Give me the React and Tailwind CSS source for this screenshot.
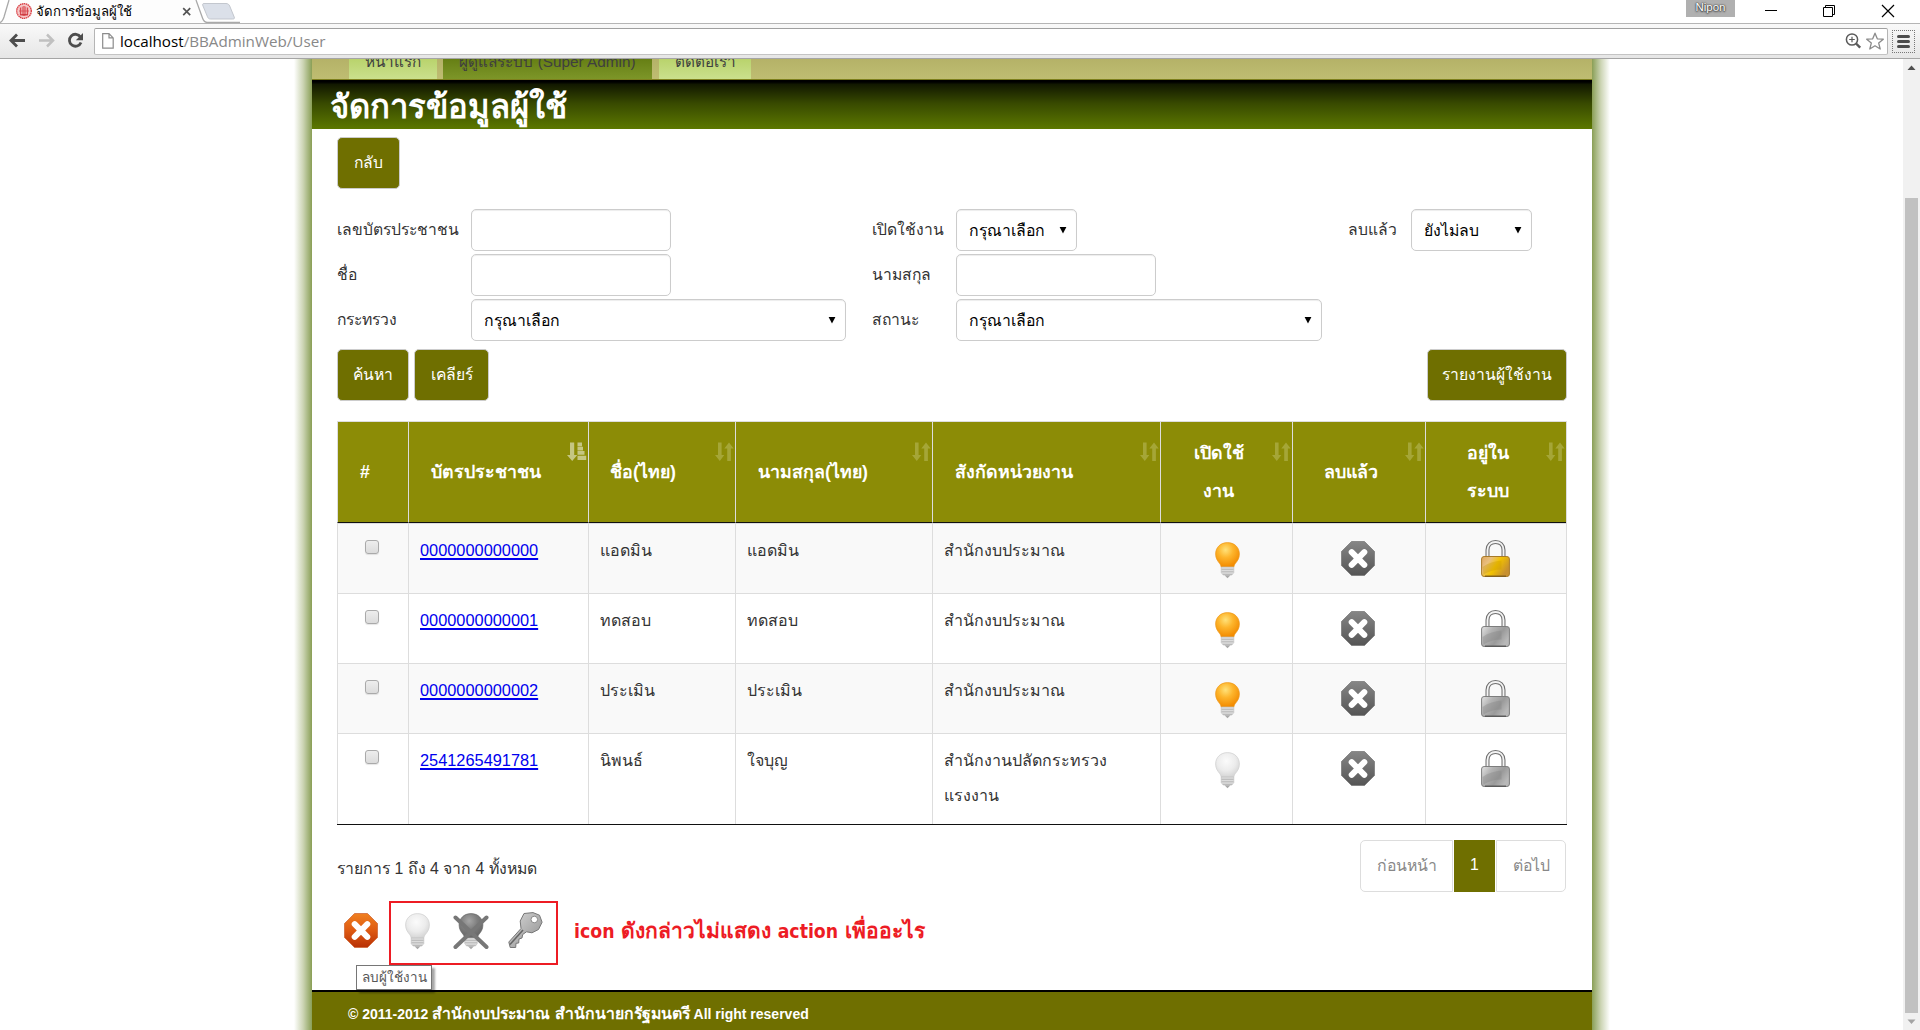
const SELECT_ARROW = (
  <svg width="8" height="8" viewBox="0 0 8 8" className="mr-0.5 shrink-0">
    <path d="M0.6 1h6.8L4 7.4z" fill="#000" />
  </svg>
);

function Defs() {
  return (
    <svg width="0" height="0" className="absolute">
      <defs>
        <radialGradient id="amber" cx="0.42" cy="0.3" r="0.7">
          <stop offset="0" stopColor="#ffe27a" />
          <stop offset="0.45" stopColor="#fdb52c" />
          <stop offset="1" stopColor="#f28a00" />
        </radialGradient>
        <radialGradient id="pale" cx="0.45" cy="0.35" r="0.65">
          <stop offset="0" stopColor="#fbfbfb" />
          <stop offset="0.6" stopColor="#ececec" />
          <stop offset="1" stopColor="#d6d6d6" />
        </radialGradient>
        <radialGradient id="ash" cx="0.42" cy="0.3" r="0.7">
          <stop offset="0" stopColor="#a6a6a6" />
          <stop offset="0.5" stopColor="#7e7e7e" />
          <stop offset="1" stopColor="#666" />
        </radialGradient>
        <linearGradient id="octGrey" x1="0" y1="0" x2="0" y2="1">
          <stop offset="0" stopColor="#868686" />
          <stop offset="1" stopColor="#555" />
        </linearGradient>
        <linearGradient id="octRed" x1="0" y1="0" x2="0" y2="1">
          <stop offset="0" stopColor="#f08020" />
          <stop offset="0.5" stopColor="#de5a12" />
          <stop offset="1" stopColor="#b83005" />
        </linearGradient>
        <linearGradient id="gold" x1="0" y1="0" x2="1" y2="0.5">
          <stop offset="0" stopColor="#e0a860" />
          <stop offset="0.3" stopColor="#e9c080" />
          <stop offset="0.6" stopColor="#f2c200" />
          <stop offset="1" stopColor="#c79030" />
        </linearGradient>
        <linearGradient id="silver" x1="0" y1="0" x2="1" y2="0.5">
          <stop offset="0" stopColor="#e4e4e4" />
          <stop offset="0.35" stopColor="#b4b4b4" />
          <stop offset="0.7" stopColor="#9a9a9a" />
          <stop offset="1" stopColor="#b8b8b8" />
        </linearGradient>
        <linearGradient id="keyFill" x1="0" y1="0" x2="1" y2="1">
          <stop offset="0" stopColor="#dadada" />
          <stop offset="1" stopColor="#8c8c8c" />
        </linearGradient>
      </defs>
    </svg>
  );
}

const BULB_GLASS =
  "M12.5 0.6C5.6 0.6 0.6 5.4 0.6 12c0 4.300 2 7 4 9.400 1 1.200 1.400 2.600 1.500 3.600h12.800c0.100-1 0.500-2.400 1.500-3.600 2-2.400 4-5.100 4-9.400C24.400 5.400 19.400 0.600 12.500 0.600z";

function BulbParts({ glass, edge }) {
  return (
    <>
      <path d={BULB_GLASS} fill={glass} stroke={edge} strokeWidth="0.7" />
      <path d="M6.200 25h12.600v5.500l-1.800 2.500h-9l-1.800-2.500z" fill="#dcdcdc" stroke="#bdbdbd" strokeWidth="0.6" />
      <path d="M6.500 27.300h12M6.500 29.800h12M8 32.300h9" stroke="#b2b2b2" strokeWidth="0.9" />
      <path d="M9.500 33.200h6L12.500 36.200z" fill="#a9a9a9" />
    </>
  );
}

function Bulb({ on }) {
  return (
    <svg width="25" height="37" viewBox="0 0 25 37">
      <BulbParts glass={on ? "url(#amber)" : "url(#pale)"} edge={on ? "#ee9a1c" : "#cfcfcf"} />
    </svg>
  );
}

function BulbCrossed() {
  return (
    <svg width="36" height="37" viewBox="0 0 36 37">
      <g transform="translate(5.500 0)">
        <BulbParts glass="url(#ash)" edge="#6a6a6a" />
      </g>
      <path d="M2.500 4.500L33.500 34M33.500 4.500L2.500 34" stroke="#777" strokeWidth="4" strokeLinecap="round" />
    </svg>
  );
}

function Octagon({ red }) {
  return (
    <svg width="34" height="35" viewBox="0 0 34 35">
      <path
        d="M10.500 0.500h13L33.500 10.500v14L23.500 34.500h-13L0.500 24.500v-14z"
        fill={red ? "url(#octRed)" : "url(#octGrey)"}
        stroke={red ? "#d06a3a" : "#7c7c7c"}
        strokeWidth="0.8"
      />
      <path d="M10.700 11.200L23.300 23.800M23.300 11.200L10.700 23.800" stroke="#fff" strokeWidth="6" strokeLinecap="round" />
    </svg>
  );
}

function Lock({ gold }) {
  return (
    <svg width="29" height="37" viewBox="0 0 29 37">
      <path d="M6.500 18v-8c0-5 3.300-8 8-8s8 3 8 8v8" fill="none" stroke="#6e6e6e" strokeWidth="4" />
      <path d="M6.500 18v-8c0-5 3.300-8 8-8s8 3 8 8v8" fill="none" stroke="#f4f4f4" strokeWidth="1.900" />
      <rect x="0.600" y="16.500" width="27.800" height="20" rx="2.500" fill={gold ? "url(#gold)" : "url(#silver)"} stroke={gold ? "#a87a28" : "#7d7d7d"} />
      <path d="M1.500 27c6-4 12-6 19-6.500v9c-7 0-12 1.500-18 5z" fill={gold ? "#c99700" : "#808080"} opacity="0.35" />
      <path d="M4 36.200h21" stroke={gold ? "#7c5c1c" : "#555"} strokeWidth="1.300" />
    </svg>
  );
}

function KeyIcon() {
  return (
    <svg width="35" height="36" viewBox="0 0 35 36">
      <path
        d="M16 1.500L25 0.600l6.500 2.600 2.600 7-3.600 7.300-6.500 3.300-5.500-1-3.800 2.700-0.700 3.500-3 1-0.300 4-2.700 0.300-0.300 4.200H2.200L0.800 30 13 16.500 12.200 9z"
        fill="url(#keyFill)"
        stroke="#777"
        strokeWidth="1"
        strokeLinejoin="round"
      />
      <path d="M2 32.500L15 18" stroke="#666" strokeWidth="1.600" />
      <circle cx="26.300" cy="7.500" r="3.300" fill="#fff" stroke="#8a8a8a" />
    </svg>
  );
}

function SortIcon({ active }) {
  return active ? (
    <svg width="20" height="20" viewBox="0 0 20 20" className="absolute top-[20px] right-px" fill="#c5c683">
      <path d="M3 0.500h4.200v12.500h3.100L5.200 19 0 13h3z" />
      <path d="M10.500 0.500h4.500v3.700h-4.500zM10.500 4.800h5.500v3.700h-5.500zM10.500 9.100h7v3.700h-7zM10.500 13.700h8.700v4.200h-8.700z" />
    </svg>
  ) : (
    <svg width="19" height="20" viewBox="0 0 19 20" className="absolute top-[20px] right-px" fill="#a5a637">
      <path d="M3 0.500h3.600v12.500h2.700L4.800 19 0 13h3z" />
      <path d="M12.200 19V6.500H9.300L14 0.500l4.700 6h-2.800V19z" />
    </svg>
  );
}

function Button({ children, className }) {
  return (
    <button className={`flex shrink-0 justify-center rounded-[5px] border border-[#ccc] bg-[#6f6f00] text-[15.700px] leading-[49px] font-light whitespace-nowrap text-white ${className}`}>
      {children}
    </button>
  );
}

function TextBox({ className }) {
  return <div className={`h-[42px] rounded-[5px] border border-[#ccc] bg-white shadow-[inset_0_1px_1px_rgba(0,0,0,0.075)] ${className}`} />;
}

function SelectBox({ children, className }) {
  return (
    <div className={`flex h-[42px] items-center justify-between rounded-[5px] border border-[#ccc] bg-white pr-[7px] pl-3 text-[15.800px] font-light text-black shadow-[inset_0_1px_1px_rgba(0,0,0,0.075)] ${className}`}>
      <span className="pt-[2px]">{children}</span>
      {SELECT_ARROW}
    </div>
  );
}

function Label({ children }) {
  return <span className="text-[15.700px] font-light whitespace-nowrap text-[#333]">{children}</span>;
}

const HEAD = [
  { t: "#", c: "pl-[22px] text-left", s: "" },
  { t: "บัตรประชาชน", c: "pl-[22px] text-left", s: "active" },
  { t: "ชื่อ(ไทย)", c: "pl-[21px] text-left", s: "both" },
  { t: "นามสกุล(ไทย)", c: "pl-[22px] text-left", s: "both" },
  { t: "สังกัดหน่วยงาน", c: "pl-[22px] text-left", s: "both" },
  { t: "เปิดใช้\nงาน", c: "pr-[16px] text-center", s: "both" },
  { t: "ลบแล้ว", c: "pr-[16px] text-center", s: "both" },
  { t: "อยู่ใน\nระบบ", c: "pr-[17px] text-center", s: "both" },
];

const ROWS = [
  { id: "0000000000000", first: "แอดมิน", last: "แอดมิน", org: "สำนักงบประมาณ", on: true, online: true },
  { id: "0000000000001", first: "ทดสอบ", last: "ทดสอบ", org: "สำนักงบประมาณ", on: true, online: false },
  { id: "0000000000002", first: "ประเมิน", last: "ประเมิน", org: "สำนักงบประมาณ", on: true, online: false },
  { id: "2541265491781", first: "นิพนธ์", last: "ใจบุญ", org: "สำนักงานปลัดกระทรวง\nแรงงาน", on: false, online: false },
];

function UserTable() {
  return (
    <table className="w-[1230px] table-fixed border-separate border-spacing-0 border-r border-[#ddd]">
      <colgroup>
        <col className="w-[71px]" />
        <col className="w-[180px]" />
        <col className="w-[147px]" />
        <col className="w-[197px]" />
        <col className="w-[228px]" />
        <col className="w-[132px]" />
        <col className="w-[133px]" />
        <col className="w-[141px]" />
      </colgroup>
      <thead>
        <tr className="h-[102px] bg-[#8c8c06]">
          {HEAD.map((h) => (
            <th
              key={h.t}
              className={`relative border-t border-b border-l border-t-[#ddd] border-b-[#111] border-l-[#ddd] py-0 align-middle text-[17.800px] leading-[38px] font-semibold whitespace-pre text-white ${h.c}`}
            >
              {h.t}
              {h.s && <SortIcon active={h.s === "active"} />}
            </th>
          ))}
        </tr>
      </thead>
      <tbody className="text-[16px] leading-[35px] font-light text-[#333] [&_td]:border-t [&_td]:border-l [&_td]:border-[#ddd] [&_td]:pt-[9px] [&_td]:align-top">
        {ROWS.map((r, i) => (
          <tr key={r.id} className={i === 3 ? "h-[91px] bg-white" : i % 2 ? "h-[70px] bg-white" : "h-[70px] bg-[#f9f9f9]"}>
            <td className="pl-[27px]">
              <div className="mt-[7px] h-[14px] w-[14px] rounded-[3px] border border-[#aaa] bg-linear-to-b from-[#eee] to-[#dcdcdc] shadow-[0_1px_1px_rgba(0,0,0,0.1)]" />
            </td>
            <td className="pl-[11px] text-[16.350px]">
              <a className="text-[#0000ee] underline decoration-2 underline-offset-2">{r.id}</a>
            </td>
            <td className="pl-[11px]">{r.first}</td>
            <td className="pl-[11px]">{r.last}</td>
            <td className="pl-[11px] whitespace-pre">{r.org}</td>
            <td>
              <div className="flex justify-center pt-[9px] pl-[2px]"><Bulb on={r.on} /></div>
            </td>
            <td>
              <div className="flex justify-center pt-[8px] pr-[2px]"><Octagon /></div>
            </td>
            <td>
              <div className="flex justify-center pt-[7px] pr-[2px]"><Lock gold={r.online} /></div>
            </td>
          </tr>
        ))}
      </tbody>
    </table>
  );
}

function Browser() {
  return (
    <header className="flex h-[59px] shrink-0 flex-col bg-white">
      <div className="flex h-[23px] shrink-0 justify-between">
        <div className="flex h-[23px]">
          <div className="relative flex h-[23px] w-[207px] items-start">
            <svg width="240" height="23" viewBox="0 0 240 23" className="absolute top-0 left-0">
              <path d="M0 22.500C2 22 3 20 4 17L9 0H196l6.500 18c1 3 2.500 4.500 5 4.500z" fill="#fdfdfd" />
              <path d="M0 22.500C2 22 3 20 4 17L9 0M196 0l6.500 18c1 3 2.500 4.500 5 4.500H240" fill="none" stroke="#a9a9a9" strokeWidth="1.300" />
              <path d="M204 3.500h22c2 0 3 1 3.700 2.500l4.500 11c0.600 1.500 0 2-1.500 2h-22c-2 0-2.500-0.700-3.200-2.200L203 6c-0.700-1.700-0.500-2.500 1-2.500z" fill="#dbe0e9" stroke="#c3c7ce" />
            </svg>
            <svg width="16" height="16" viewBox="0 0 16 16" className="relative mt-[3px] ml-[16px]">
              <circle cx="8" cy="8" r="7.300" fill="#f6c9c9" stroke="#d8383e" strokeWidth="1.300" strokeDasharray="1.500 0.500" />
              <path d="M4.500 4.500v7M8 3v10M11.500 4.500v7" stroke="#d94a50" strokeWidth="1.300" />
              <path d="M6.300 3.500v9M9.700 3.500v9M3 8h10" stroke="#d94a50" strokeWidth="0.800" />
              <path d="M4 11.800h8" stroke="#c8262c" strokeWidth="1.100" />
            </svg>
            <span className="relative ml-[4px] text-[13.200px] leading-[23px] text-black">จัดการข้อมูลผู้ใช้</span>
            <svg width="10" height="10" viewBox="0 0 10 10" className="absolute top-[7px] left-[182px]">
              <path d="M1.200 1.200l7 7M8.200 1.200l-7 7" stroke="#555" strokeWidth="1.700" />
            </svg>
          </div>
        </div>
        <div className="flex items-start">
          <div className="flex h-[17px] w-[49px] justify-center bg-[#b0b0b0] text-[11.500px] leading-[15px] text-white [text-shadow:0_0_1px_#333,0_0_2px_#444,0_1px_2px_#444]">Nipon</div>
          <svg width="185" height="22" viewBox="0 0 185 22" fill="none" stroke="#000" strokeWidth="1">
            <path d="M30 10.500h12" />
            <path d="M88.500 7.500h9v9h-9zM90.500 7.500v-2h9v9h-2" />
            <path d="M147 5l12 12M159 5l-12 12" strokeWidth="1.200" />
          </svg>
        </div>
      </div>
      <div className="flex h-[36px] items-center border-t border-b border-t-[#b5b5b5] border-b-[#a5a5a5] bg-linear-to-b from-[#f9f9f9] to-[#e6e6e6]">
        <svg width="94" height="34" viewBox="0 0 94 34" className="shrink-0">
          <path d="M11 16.500h14M17 10.500l-6 6 6 6" fill="none" stroke="#4d4d4d" strokeWidth="2.800" />
          <path d="M39 16.500h14M47 10.500l6 6-6 6" fill="none" stroke="#c0c0c0" strokeWidth="2.500" />
          <path d="M80.500 13a6 6 0 1 0 0.500 5.500" fill="none" stroke="#4d4d4d" strokeWidth="2.800" />
          <path d="M83 9v7.200h-7.200z" fill="#4d4d4d" />
        </svg>
        <div className="flex h-[27px] w-[1794px] shrink-0 items-center rounded-[2px] border border-t-[#a0a0a0] border-r-[#b5b5b5] border-b-[#c4c4c4] border-l-[#b5b5b5] bg-white">
          <svg width="12" height="16" viewBox="0 0 12 16" className="ml-[7px]">
            <path d="M0.700 0.700h6.300l4.200 4.200v10.200H0.700zM7 0.700v4.200h4.200" fill="#fff" stroke="#8c8c8c" strokeWidth="1.200" />
          </svg>
          <span className="ml-[6px] font-['Open_Sans','Noto_Sans',sans-serif] text-[15.200px] leading-[24px] text-[#888]">
            <span className="text-black">localhost</span>/BBAdminWeb/User
          </span>
          <svg width="46" height="20" viewBox="0 0 46 20" className="mr-[-2px] ml-auto" fill="none">
            <circle cx="9" cy="8.500" r="5.600" stroke="#5a5a5a" strokeWidth="1.500" />
            <path d="M13 12.500l4.200 4.200" stroke="#5a5a5a" strokeWidth="2.400" />
            <path d="M6.200 8.500h5.600M9 5.700v5.600" stroke="#5a5a5a" strokeWidth="1.200" />
            <path d="M32 2.200l2.300 5.600 6 0.400-4.600 3.900 1.500 5.900-5.200-3.200-5.200 3.200 1.500-5.900-4.600-3.900 6-0.400z" stroke="#8a8a8a" strokeWidth="1.300" strokeLinejoin="round" />
          </svg>
        </div>
        <div className="ml-[4px] flex h-[23px] w-[23px] flex-col items-center justify-center gap-[2px] border border-dotted border-[#777]">
          <div className="h-[3px] w-[13px] rounded-sm bg-[#4d4d4d]" />
          <div className="h-[3px] w-[13px] rounded-sm bg-[#4d4d4d]" />
          <div className="h-[3px] w-[13px] rounded-sm bg-[#4d4d4d]" />
        </div>
      </div>
    </header>
  );
}

export default function App() {
  return (
    <div className="flex h-[1030px] w-[1920px] flex-col overflow-hidden bg-white font-['Liberation_Sans',sans-serif]">
      <Defs />
      <Browser />
      <div className="flex h-[971px]">
        <main className="flex w-[1903px] pl-[294px]">
          <div className="w-[18px] bg-linear-to-l from-[#8a9f55] via-[#cdd5b5] to-white" />
          <div className="flex w-[1280px] flex-col">
            <nav className="flex h-[21px] shrink-0 items-start overflow-hidden border-b border-[#7d7f1c] bg-linear-to-b from-[#b5b268] to-[#bfbd72] pl-[37px] text-[15.300px] text-[#3f3f3f]">
              <div className="flex h-[20px] w-[88px] justify-center bg-linear-to-b from-[#b9d36c] to-[#cbe08d] leading-[6px]">หน้าแรก</div>
              <div className="ml-[6px] flex h-[20px] w-[209px] justify-center bg-linear-to-b from-[#667f14] to-[#7d9628] leading-[6px]">ผู้ดูแลระบบ (Super Admin)</div>
              <div className="ml-[7px] flex h-[20px] w-[92px] justify-center bg-linear-to-b from-[#b9d36c] to-[#cbe08d] leading-[6px]">ติดต่อเรา</div>
            </nav>
            <h1 className="h-[49px] shrink-0 bg-[linear-gradient(#000_0%,#000_4%,#121800_9%,#384a00_48%,#5c7800_100%)] pl-[18px] text-[32.800px] leading-[54px] font-bold text-white">จัดการข้อมูลผู้ใช้</h1>

            <section className="flex grow flex-col pt-[8px] pl-[25px]">
              <Button className="h-[52px] w-[63px]">กลับ</Button>

              <div className="mt-[20px] grid grid-cols-[134px_401px_84px_392px_63px_121px] gap-y-[3px] [&>*]:self-center">
                <Label>เลขบัตรประชาชน</Label>
                <TextBox className="w-[200px]" />
                <Label>เปิดใช้งาน</Label>
                <SelectBox className="w-[121px]">กรุณาเลือก</SelectBox>
                <Label>ลบแล้ว</Label>
                <SelectBox className="w-[121px]">ยังไม่ลบ</SelectBox>
                <Label>ชื่อ</Label>
                <TextBox className="w-[200px]" />
                <Label>นามสกุล</Label>
                <TextBox className="col-span-3 w-[200px]" />
                <Label>กระทรวง</Label>
                <SelectBox className="w-[375px]">กรุณาเลือก</SelectBox>
                <Label>สถานะ</Label>
                <SelectBox className="col-span-3 w-[366px]">กรุณาเลือก</SelectBox>
              </div>

              <div className="mt-[8px] flex w-[1230px]">
                <Button className="h-[52px] w-[72px]">ค้นหา</Button>
                <Button className="ml-[5px] h-[52px] w-[75px]">เคลียร์</Button>
                <Button className="ml-auto h-[52px] w-[140px]">รายงานผู้ใช้งาน</Button>
              </div>

              <div className="mt-[20px] w-[1230px] border-b border-[#111]">
                <UserTable />
              </div>

              <div className="flex h-[76px] w-[1229px] items-start justify-between">
                <span className="pt-[32px] text-[15.800px] leading-[24px] font-light text-[#333]">รายการ 1 ถึง 4 จาก 4 ทั้งหมด</span>
                <div className="mt-[15px] flex text-[15.800px] leading-[50px] font-light text-[#888]">
                  <div className="flex h-[52px] w-[93px] justify-center rounded-l-[5px] border border-[#ddd]">ก่อนหน้า</div>
                  <div className="mr-px ml-px flex h-[52px] w-[41px] justify-center bg-[#6f6f00] text-white">1</div>
                  <div className="flex h-[52px] w-[70px] justify-center rounded-r-[5px] border border-[#ddd]">ต่อไป</div>
                </div>
              </div>

              <div className="relative flex h-[64px] items-center pl-[7px]">
                <div className="mb-[5px]"><Octagon red /></div>
                <div className="ml-[11px] flex h-[64px] w-[169px] items-center border-2 border-[#ed1c24] pb-[4px] pl-[14px]">
                  <Bulb />
                  <div className="ml-[23px]"><BulbCrossed /></div>
                  <div className="mb-[2px] ml-[19px]"><KeyIcon /></div>
                </div>
                <p className="mb-[4px] ml-[16px] font-['DejaVu_Sans_Condensed','DejaVu_Sans',sans-serif] text-[21px] leading-[24px] font-semibold whitespace-nowrap text-[#ed1c24]">
                  <span className="text-[19.300px] font-bold">icon</span> ดังกล่าวไม่แสดง <span className="text-[19.300px] font-bold">action</span> เพื่ออะไร
                </p>
                <div className="absolute top-[64px] left-[19px] z-10 flex h-[25px] w-[76px] justify-center border border-[#767676] bg-white text-[13.500px] leading-[24px] text-[#575757] shadow-[3px_3px_2px_rgba(0,0,0,0.35)]">ลบผู้ใช้งาน</div>
              </div>
            </section>

            <footer className="h-[40px] shrink-0 border-t-2 border-black bg-[#6f6f00] pl-[36px] text-[14px] leading-[43px] font-bold text-white">
              © 2011-2012 <span className="text-[15.800px] font-semibold">สำนักงบประมาณ สำนักนายกรัฐมนตรี</span> All right reserved
            </footer>
          </div>
          <div className="w-[18px] bg-linear-to-r from-[#8a9f55] via-[#cdd5b5] to-white" />
        </main>
        <aside className="flex w-[17px] flex-col items-center justify-between bg-[#f1f1f1]">
          <svg width="17" height="139" viewBox="0 0 17 139">
            <path d="M4.500 11l4-4.500 4 4.500z" fill="#505050" />
          </svg>
          <div className="w-[13px] grow bg-[#c1c1c1]" />
          <svg width="17" height="17" viewBox="0 0 17 17">
            <path d="M4.500 6.500l4 4.500 4-4.500z" fill="#a3a3a3" />
          </svg>
        </aside>
      </div>
    </div>
  );
}
